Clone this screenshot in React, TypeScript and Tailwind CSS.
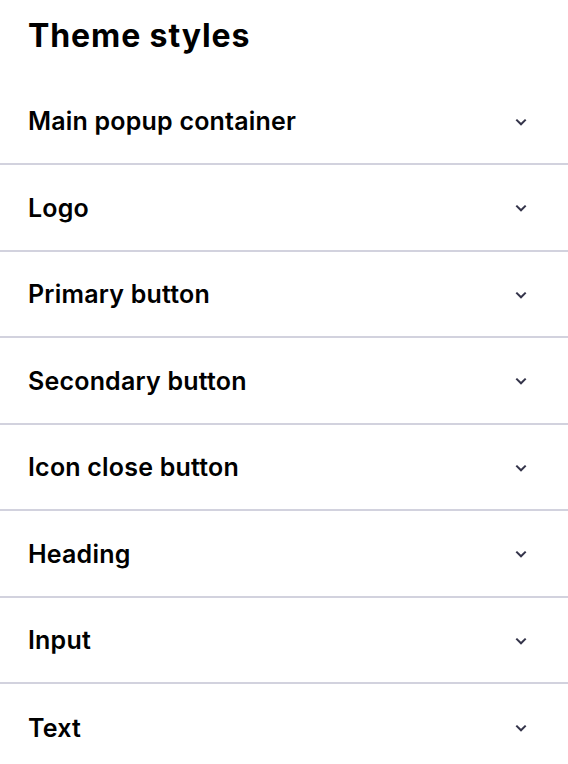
import React from "react";

const items = [
  "Main popup container",
  "Logo",
  "Primary button",
  "Secondary button",
  "Icon close button",
  "Heading",
  "Input",
  "Text",
];

function Chevron() {
  return (
    <svg width="12" height="8" viewBox="0 0 12 8" fill="none">
      <path d="M1.3 1.6 6 6.3l4.7-4.7" stroke="#34344a" strokeWidth="2" strokeLinecap="butt" strokeLinejoin="miter" />
    </svg>
  );
}

export default function App() {
  return (
    <div className="w-[568px] h-[764px] bg-white overflow-hidden text-black" style={{ fontFamily: "Inter, 'Noto Sans', sans-serif" }}>
      <div className="h-[78.5px] flex items-center pl-[28px] pb-[6px]">
        <h1 className="text-[32px] font-bold tracking-[0.9px] leading-none">Theme styles</h1>
      </div>
      {items.map((it, i) => (
        <div
          key={it}
          className={`h-[86.5px] flex items-center justify-between pl-[28px] pr-[41px] pt-[2px] ${i < items.length - 1 ? "border-b-2 border-[#d2d2de]" : ""}`}
        >
          <span className="text-[25px] font-semibold leading-none tracking-[0.2px]">{it}</span>
          <Chevron />
        </div>
      ))}
    </div>
  );
}
